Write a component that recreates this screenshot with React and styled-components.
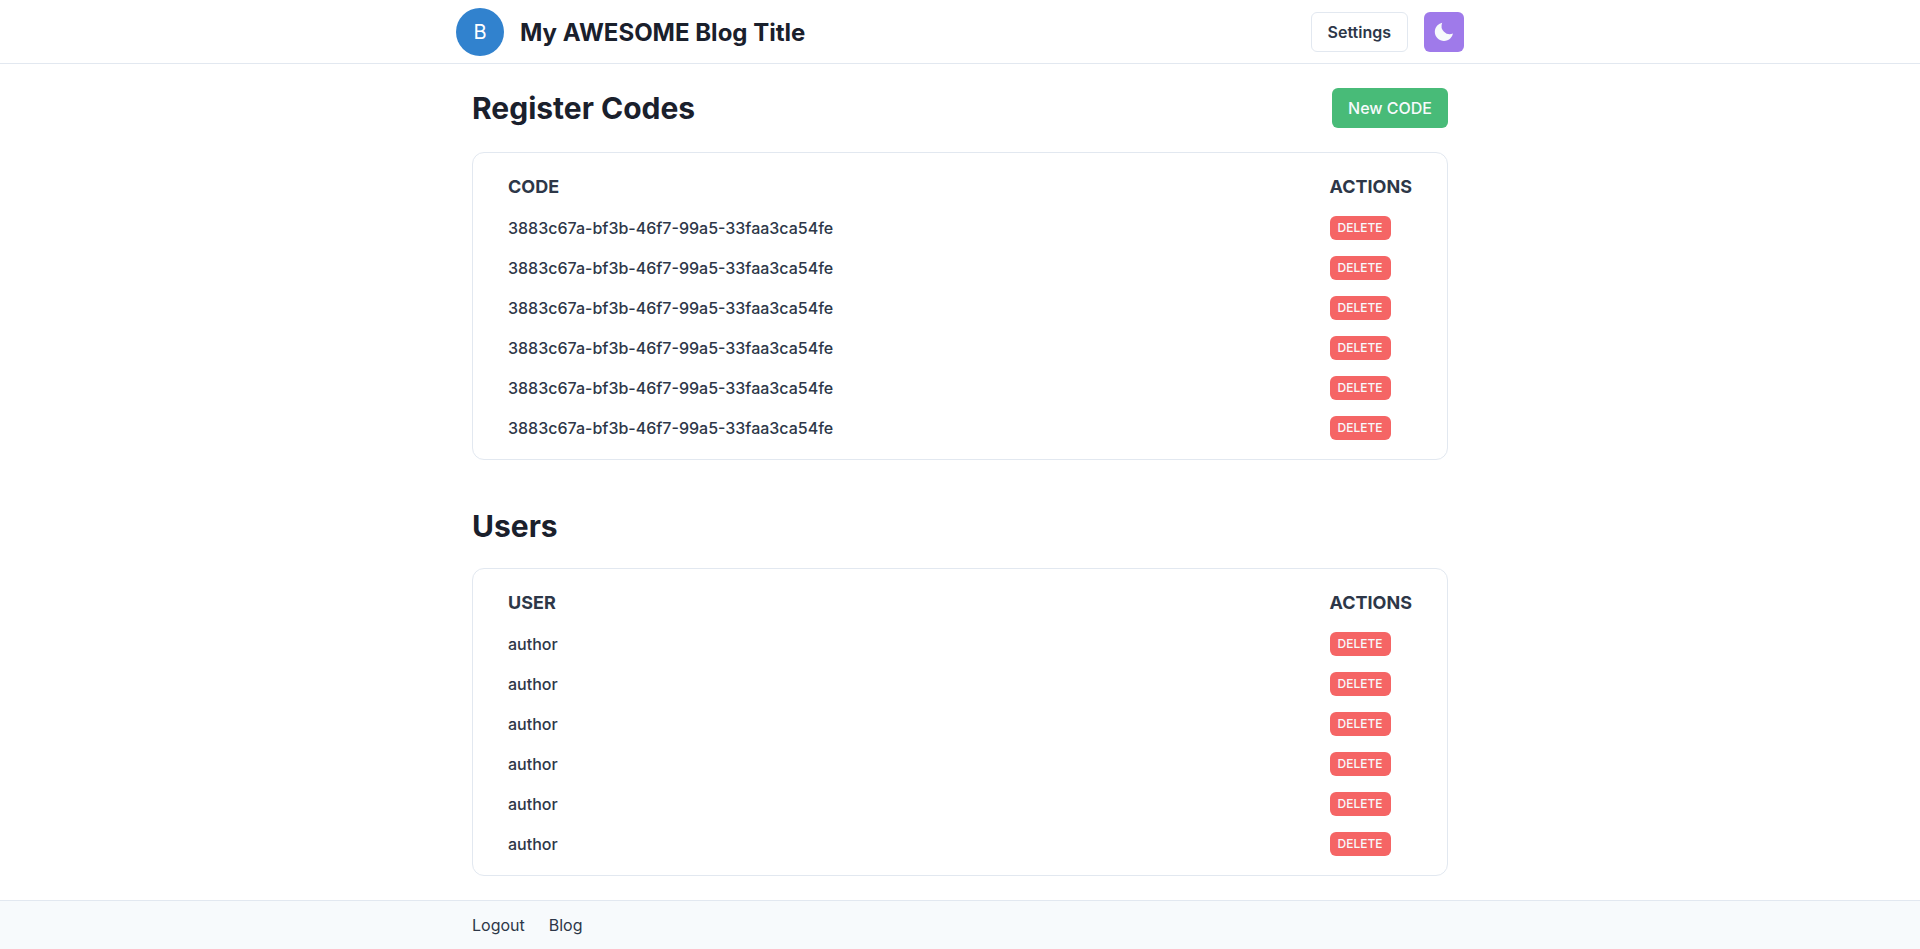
import React from "react";
import styled, { createGlobalStyle } from "styled-components";

const Global = createGlobalStyle`
  *, *::before, *::after { box-sizing: border-box; }
  body { margin: 0; background: #fff; color: #1a202c; font-family: Inter, sans-serif; font-size: 16px; line-height: 24px; -webkit-font-smoothing: antialiased; }
  button { font-family: inherit; cursor: pointer; }
  h1, h2 { margin: 0; }
`;

const Page = styled.div`
  min-height: 100vh;
  display: flex;
  flex-direction: column;
`;

const Header = styled.header`
  border-bottom: 1px solid #e2e8f0;
`;

const HeaderInner = styled.div`
  max-width: 1024px;
  margin: 0 auto;
  padding: 8px 8px 7px;
  display: flex;
  align-items: center;
  justify-content: space-between;
`;

const Group = styled.div`
  display: flex;
  align-items: center;
  gap: 16px;
`;

const Avatar = styled.div`
  width: 48px;
  height: 48px;
  border-radius: 50%;
  background: #3182ce;
  color: #fff;
  font-size: 20px;
  display: flex;
  align-items: center;
  justify-content: center;
`;

const SiteTitle = styled.h1`
  font-size: 24px;
  line-height: 33px;
  font-weight: 700;
`;

const Button = styled.button`
  height: 40px;
  padding: 0 16px;
  border: 0;
  border-radius: 6px;
  background: #48bb78;
  color: #f7fafc;
  font-size: 16px;
  font-weight: 500;
`;

const OutlineButton = styled(Button)`
  border: 1px solid #e2e8f0;
  background: #fff;
  color: #2d3748;
  font-weight: 600;
`;

const IconButton = styled(Button)`
  width: 40px;
  padding: 0;
  background: #9f7aea;
  display: flex;
  align-items: center;
  justify-content: center;
`;

const SmallButton = styled.button`
  display: block;
  height: 24px;
  padding: 0 8px;
  border: 0;
  border-radius: 6px;
  background: #f56565;
  color: #f7fafc;
  font-size: 12px;
  line-height: 16px;
  font-weight: 500;
`;

const Main = styled.main`
  width: 100%;
  max-width: 1024px;
  margin: 0 auto;
  padding: 24px;
  flex: 1;
`;

const Section = styled.section`
  & + & { margin-top: 48px; }
`;

const SectionHead = styled.div`
  display: flex;
  align-items: center;
  justify-content: space-between;
  min-height: 36px;
  margin-bottom: 24px;
`;

const SectionTitle = styled.h2`
  font-size: 30px;
  line-height: 36px;
  font-weight: 700;
`;

const Card = styled.div`
  border: 1px solid #e2e8f0;
  border-radius: 12px;
  padding: 11px 27px;
`;

const Table = styled.table`
  width: 100%;
  border-collapse: collapse;
  color: #2d3748;
`;

const Cell = styled.td`
  height: 40px;
  padding: 0 8px;
  font-weight: 500;
`;

const HeadCell = styled.th`
  height: 44px;
  padding: 2px 8px 0;
  text-align: left;
  font-size: 18px;
  font-weight: 700;
  width: ${(p) => (p.$narrow ? "1px" : "auto")};
`;

const Footer = styled.footer`
  background: #f7fafc;
  border-top: 1px solid #e2e8f0;
`;

const FooterNav = styled.nav`
  max-width: 1024px;
  margin: 0 auto;
  padding: 12px 24px;
  display: flex;
  gap: 24px;
`;

const FooterLink = styled.a`
  color: #2d3748;
  text-decoration: none;
`;

const MoonIcon = () => (
  <svg width="22" height="22" viewBox="0 0 24 24" fill="#f7fafc" aria-hidden="true">
    <path d="M12 11.807A9.002 9.002 0 0 1 10.049 2a9.942 9.942 0 0 0-5.12 2.735c-3.905 3.905-3.905 10.237 0 14.142 3.906 3.906 10.237 3.905 14.143 0a9.946 9.946 0 0 0 2.735-5.119A9.003 9.003 0 0 1 12 11.807z" />
  </svg>
);

const codes = Array(6).fill("3883c67a-bf3b-46f7-99a5-33faa3ca54fe");
const users = Array(6).fill("author");

const DataTable = ({ label, rows }) => (
  <Card>
    <Table>
      <thead>
        <tr>
          <HeadCell>{label}</HeadCell>
          <HeadCell $narrow>ACTIONS</HeadCell>
        </tr>
      </thead>
      <tbody>
        {rows.map((row, i) => (
          <tr key={i}>
            <Cell>{row}</Cell>
            <Cell><SmallButton type="button">DELETE</SmallButton></Cell>
          </tr>
        ))}
      </tbody>
    </Table>
  </Card>
);

export default function App() {
  return (
    <Page>
      <Global />
      <Header>
        <HeaderInner>
          <Group>
            <Avatar>B</Avatar>
            <SiteTitle>My AWESOME Blog Title</SiteTitle>
          </Group>
          <Group>
            <OutlineButton type="button">Settings</OutlineButton>
            <IconButton type="button" aria-label="Toggle dark mode"><MoonIcon /></IconButton>
          </Group>
        </HeaderInner>
      </Header>
      <Main>
        <Section>
          <SectionHead>
            <SectionTitle>Register Codes</SectionTitle>
            <Button type="button">New CODE</Button>
          </SectionHead>
          <DataTable label="CODE" rows={codes} />
        </Section>
        <Section>
          <SectionHead>
            <SectionTitle>Users</SectionTitle>
          </SectionHead>
          <DataTable label="USER" rows={users} />
        </Section>
      </Main>
      <Footer>
        <FooterNav>
          <FooterLink href="#logout">Logout</FooterLink>
          <FooterLink href="#blog">Blog</FooterLink>
        </FooterNav>
      </Footer>
    </Page>
  );
}
